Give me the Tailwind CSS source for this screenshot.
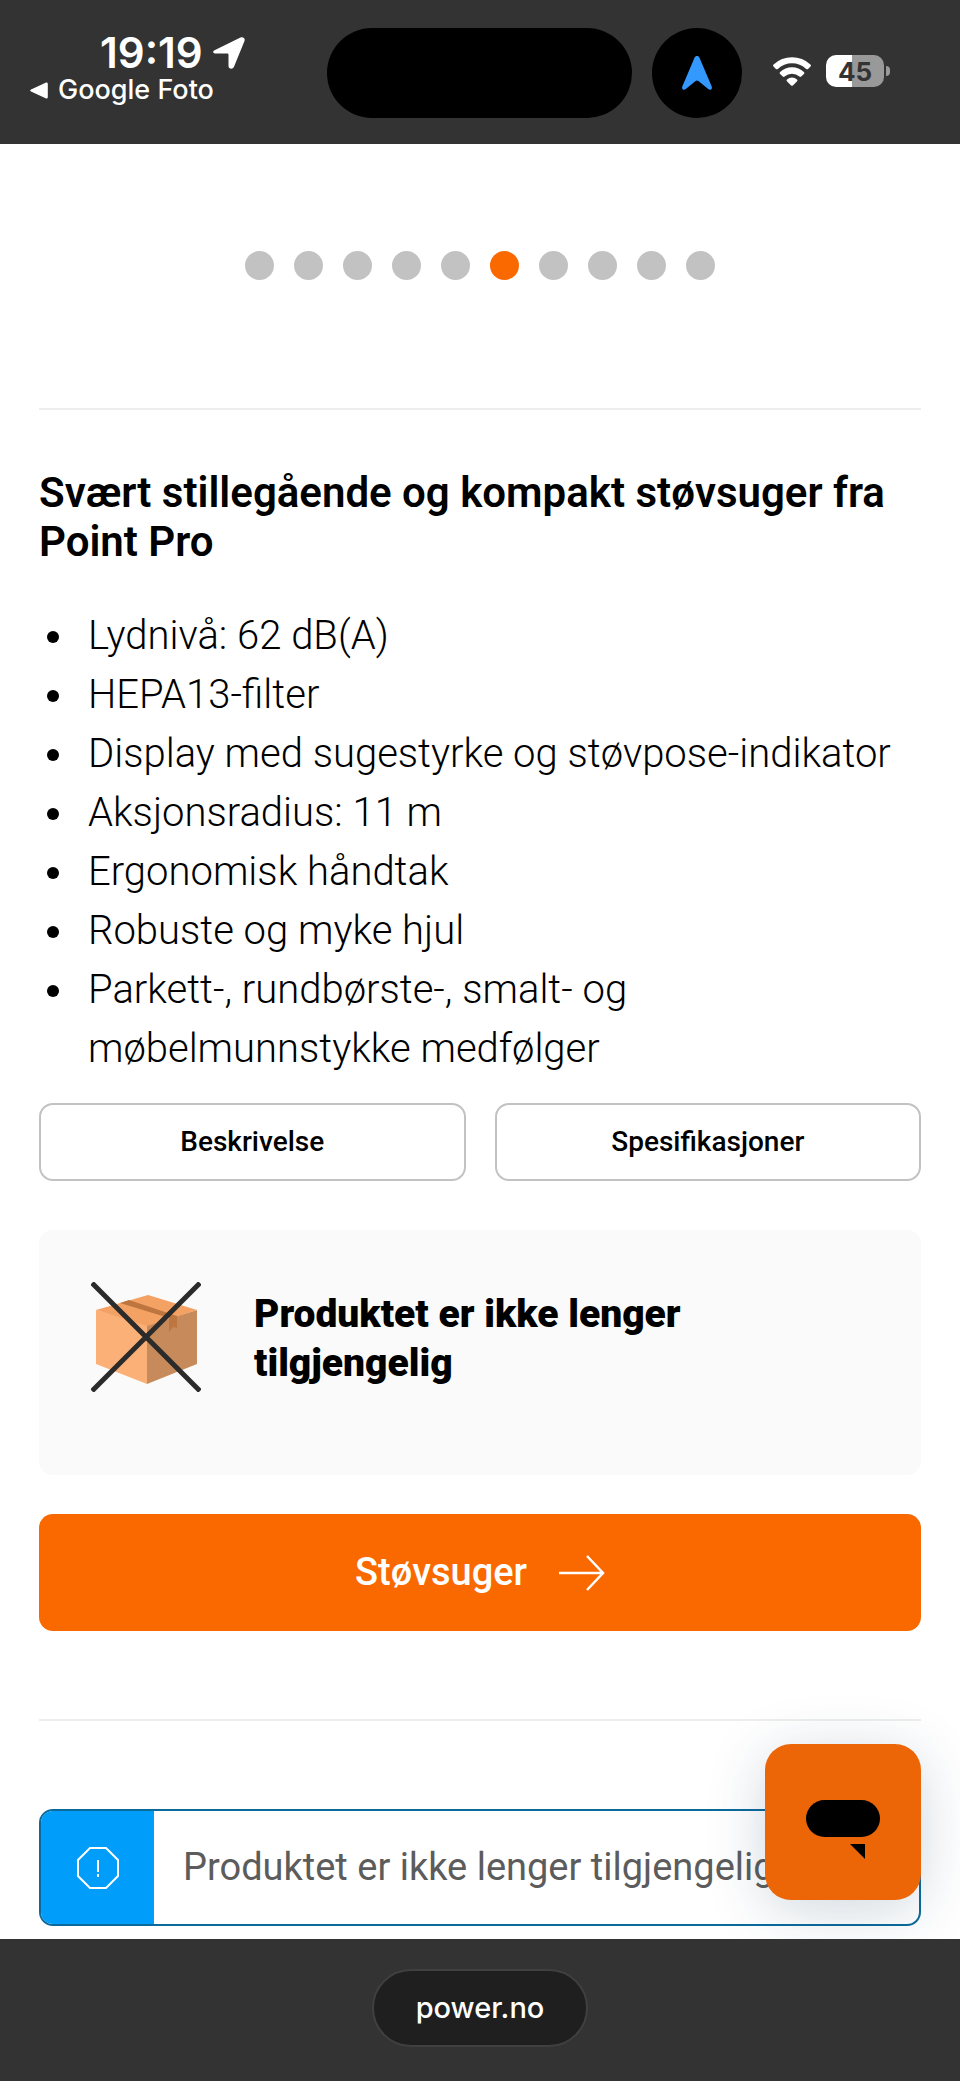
<!DOCTYPE html>
<html lang="no">
<head>
  <meta charset="UTF-8" />
  <meta name="viewport" content="width=device-width, initial-scale=1" />
  <title>POWER</title>
  <script src="https://cdn.jsdelivr.net/npm/@tailwindcss/browser@4"></script>
</head>
<body class="bg-white text-black font-[Roboto,sans-serif]">

  <!-- Status bar -->
  <header class="flex h-36 items-start justify-center bg-[#333333] pt-7 text-white font-[Inter,sans-serif]">
    <div class="flex-1 pl-[30px]">
      <div class="flex items-center gap-[10px] pl-[70px]">
        <span class="text-[42px] leading-[50px] font-semibold">19:19</span>
        <svg class="h-8 w-8 shrink-0" viewBox="0 0 32 32" fill="currentColor">
          <path d="M2 13 27.500.5c2.700-1.200 5 1 3.900 3.700L21 29.800c-1.200 2.900-5.500 2.300-5.500-.8V17.800c0-.9-.4-1.300-1.300-1.300H3C-.3 16.500-.9 14.400 2 13z"/>
        </svg>
      </div>
      <a href="#" class="flex items-center gap-[10px] text-[27px] leading-6 font-medium">
        <svg class="h-[17px] w-[18px]" viewBox="0 0 18 17" fill="currentColor">
          <path d="M1 7.600 15.600.7c1.300-.5 2.200 0 2.200 1.300v13c0 1.300-.9 1.800-2.200 1.300L1 9.400c-1-.5-1-1.300 0-1.800z"/>
        </svg>
        Google Foto
      </a>
    </div>
    <div class="flex gap-5">
      <div class="h-[90px] w-[305px] rounded-full bg-black"></div>
      <div class="flex h-[90px] w-[90px] items-center justify-center rounded-full bg-black">
        <svg class="h-[34px] w-8" viewBox="0 0 32 34" fill="#3399ff">
          <path d="M13.400 2c1-2.600 4.200-2.600 5.200 0l12 28.200c1.200 2.800-1.200 4.600-3.400 2.900L17.400 25c-.9-.7-1.900-.7-2.800 0l-9.800 8.100c-2.200 1.700-4.600-.1-3.400-2.900z"/>
        </svg>
      </div>
    </div>
    <div class="flex h-[86px] w-[218px] items-center gap-[14px] pl-[30px]">
      <svg class="h-[30px] w-[40px]" viewBox="0 0 40 30" fill="currentColor">
        <path d="M1.600 8.600a26.500 26.500 0 0 1 36.800 0c.7.6.7 1.300.1 1.900l-2.400 2.400c-.6.6-1.300.6-1.900 0a20.500 20.500 0 0 0-28.400 0c-.6.6-1.300.6-1.900 0l-2.400-2.400c-.6-.6-.6-1.300.1-1.900z"/>
        <path d="M8.100 16.100a17 17 0 0 1 23.800 0c.6.6.6 1.300 0 1.900l-2.700 2.600c-.6.6-1.200.6-1.800 0a10.700 10.700 0 0 0-14.800 0c-.6.6-1.200.6-1.800 0l-2.700-2.600c-.6-.6-.6-1.300 0-1.900z"/>
        <path d="M15 23.500a7.600 7.600 0 0 1 10 0c.6.500.6 1.100.1 1.700l-4.200 4.200c-.6.500-1.200.5-1.800 0l-4.200-4.200c-.5-.6-.5-1.200.1-1.700z"/>
      </svg>
      <div class="flex items-center gap-[2px]">
        <div class="flex h-8 w-[58px] items-center justify-center rounded-[10px] bg-linear-to-r from-white from-45% to-[#999999] to-45% text-[26px] font-bold text-[#333333]">45</div>
        <div class="h-[10px] w-1 rounded-r-full bg-[#999999]"></div>
      </div>
    </div>
  </header>

  <main class="relative px-[39px] pb-[13px]">
    <!-- Carousel dots -->
    <div class="flex justify-center gap-5 pt-[107px] pb-32">
      <button aria-label="Bilde 1" class="h-[29px] w-[29px] rounded-full bg-[#c2c2c2]"></button>
      <button aria-label="Bilde 2" class="h-[29px] w-[29px] rounded-full bg-[#c2c2c2]"></button>
      <button aria-label="Bilde 3" class="h-[29px] w-[29px] rounded-full bg-[#c2c2c2]"></button>
      <button aria-label="Bilde 4" class="h-[29px] w-[29px] rounded-full bg-[#c2c2c2]"></button>
      <button aria-label="Bilde 5" class="h-[29px] w-[29px] rounded-full bg-[#c2c2c2]"></button>
      <button aria-label="Bilde 6" class="h-[29px] w-[29px] rounded-full bg-[#fa6900]"></button>
      <button aria-label="Bilde 7" class="h-[29px] w-[29px] rounded-full bg-[#c2c2c2]"></button>
      <button aria-label="Bilde 8" class="h-[29px] w-[29px] rounded-full bg-[#c2c2c2]"></button>
      <button aria-label="Bilde 9" class="h-[29px] w-[29px] rounded-full bg-[#c2c2c2]"></button>
      <button aria-label="Bilde 10" class="h-[29px] w-[29px] rounded-full bg-[#c2c2c2]"></button>
    </div>

    <hr class="border-t-2 border-[#eeeeee]" />

    <h1 class="mt-[58px] text-[42px] leading-[49px] font-semibold">Svært stillegående og kompakt støvsuger fra Point Pro</h1>

    <ul class="mt-10 list-disc pl-[39px] text-[40px] leading-[59px] font-[350]">
      <li class="pl-[10px]">Lydnivå: 62 dB(A)</li>
      <li class="pl-[10px]">HEPA13-filter</li>
      <li class="pl-[10px]">Display med sugestyrke og støvpose-indikator</li>
      <li class="pl-[10px]">Aksjonsradius: 11 m</li>
      <li class="pl-[10px]">Ergonomisk håndtak</li>
      <li class="pl-[10px]">Robuste og myke hjul</li>
      <li class="pl-[10px]">Parkett-, rundbørste-, smalt- og møbelmunnstykke medfølger</li>
    </ul>

    <div class="mt-[25px] grid grid-cols-2 gap-[29px]">
      <button class="h-[78px] rounded-[14px] border-2 border-[#c2c2c2] text-[28px] font-medium">Beskrivelse</button>
      <button class="h-[78px] rounded-[14px] border-2 border-[#c2c2c2] text-[28px] font-medium">Spesifikasjoner</button>
    </div>

    <section class="mt-[49px] flex gap-[53px] rounded-[14px] bg-[#fafafa] px-[52px] pt-[52px] pb-[83px]">
      <svg class="h-[110px] w-[110px] shrink-0" viewBox="0 0 110 110">
        <path d="M5 28 56 43v59L5 82z" fill="#fbb077"/>
        <path d="M56 43 106 28v54l-50 20z" fill="#c78b5b"/>
        <path d="M5 28 57 13l49 15-50 16z" fill="#f4a164"/>
        <path d="m29 21 9-3 48 16v12l-4-1-4 5V36z" fill="#bd763f"/>
        <path d="m1 1 108 108M109 1 1 109" stroke="#2b2b2b" stroke-width="5"/>
      </svg>
      <h2 class="max-w-[500px] pt-2 text-[39px] leading-[49px] font-black">Produktet er ikke lenger tilgjengelig</h2>
    </section>

    <a href="#" class="mt-[39px] flex h-[117px] items-center justify-center gap-8 rounded-[14px] bg-[#fa6900] text-[38px] font-medium text-white">
      Støvsuger
      <svg class="h-9 w-[46px]" viewBox="0 0 46 36" fill="none" stroke="currentColor" stroke-width="2.500">
        <path d="M0 18h44M28 1l16 17-16 17"/>
      </svg>
    </a>

    <hr class="mt-[88px] border-t-2 border-[#eeeeee]" />

    <div role="alert" class="mt-[88px] flex h-[117px] overflow-hidden rounded-[14px] border-2 border-[#0b6a9c]">
      <div class="flex w-[113px] shrink-0 items-center justify-center bg-[#009dfa]">
        <svg class="h-[42px] w-[42px]" viewBox="0 0 42 42" fill="none" stroke="#fff" stroke-width="2">
          <path d="M13 1h16l12 12v16L29 41H13L1 29V13z"/>
          <path d="M21 13v12M21 27v3"/>
        </svg>
      </div>
      <p class="self-center pl-[29px] text-[38px] whitespace-nowrap text-[#5c5c5c]">Produktet er ikke lenger tilgjengelig.</p>
    </div>

    <!-- Chat launcher, floats over the page -->
    <button aria-label="Chat" class="absolute right-[39px] bottom-[39px] flex h-[156px] w-[156px] items-center justify-center rounded-[26px] bg-[#ec6608] pt-4 shadow-[0_10px_60px_rgba(20,60,90,0.2)]">
      <svg class="h-[60px] w-[74px]" viewBox="0 0 74 60">
        <rect width="74" height="37" rx="18.500"/>
        <path d="M44 44h15v15z"/>
      </svg>
    </button>
  </main>

  <!-- Browser address bar -->
  <footer class="relative flex h-[142px] justify-center bg-[#333333] pt-[30px] font-[Inter,sans-serif]">
    <button class="h-[78px] w-[216px] rounded-full border-2 border-[#404040] bg-[#1f1f1f] text-[29px] font-medium text-white">power.no</button>
  </footer>

</body>
</html>
